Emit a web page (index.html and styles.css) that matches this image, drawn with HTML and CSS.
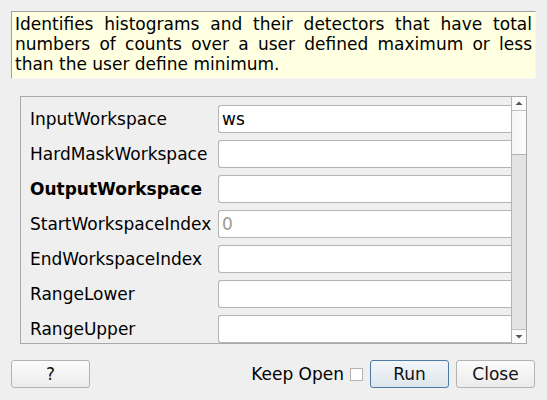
FILE: index.html
```html
<!DOCTYPE html>
<html>
<head>
<meta charset="utf-8">
<link rel="stylesheet" href="styles.css">
</head>
<body>
<div class="dialog">
  <div class="desc">Identifies histograms and their detectors that have total numbers of counts over a user defined maximum or less than the user define minimum.</div>
  <div class="panel">
    <div class="rows">
      <div class="row"><span class="label">InputWorkspace</span><div class="input">ws</div></div>
      <div class="row"><span class="label">HardMaskWorkspace</span><div class="input"></div></div>
      <div class="row"><span class="label bold">OutputWorkspace</span><div class="input"></div></div>
      <div class="row"><span class="label">StartWorkspaceIndex</span><div class="input ph">0</div></div>
      <div class="row"><span class="label">EndWorkspaceIndex</span><div class="input"></div></div>
      <div class="row"><span class="label">RangeLower</span><div class="input"></div></div>
      <div class="row"><span class="label">RangeUpper</span><div class="input"></div></div>
    </div>
    <div class="scrollbar">
      <div class="sbtn"><svg width="14" height="13" viewBox="0 0 14 13"><path d="M3.5 8 L10.5 8 L7 4.5 Z" fill="#555"/></svg></div>
      <div class="handle"></div>
      <div class="trough"></div>
      <div class="sbtn down"><svg width="14" height="13" viewBox="0 0 14 13"><path d="M3.5 5 L10.5 5 L7 8.5 Z" fill="#555"/></svg></div>
    </div>
  </div>
  <div class="footer">
    <button class="btn">?</button>
    <div class="spacer"></div>
    <span class="keep">Keep Open</span>
    <span class="check"></span>
    <button class="btn run">Run</button>
    <button class="btn">Close</button>
  </div>
</div>
</body>
</html>
```

FILE: styles.css
```css
html, body {
  margin: 0;
  padding: 0;
  background: #efefef;
  font-family: "DejaVu Sans", sans-serif;
  font-size: 17px;
  color: #000;
}
.dialog {
  width: 547px;
  height: 400px;
  box-sizing: border-box;
  padding: 11px 11px 0 11px;
}
.desc {
  background: #ffffe1;
  border-top: 1px solid #a0a0a0;
  border-left: 1px solid #a0a0a0;
  border-right: 1px solid #f6f6f6;
  border-bottom: 1px solid #f6f6f6;
  height: 68px;
  box-sizing: border-box;
  padding: 2px 3px 0 3px;
  line-height: 20px;
  text-align: justify;
  width: 525px;
}
.panel {
  margin: 17px 0 0 9px;
  width: 507px;
  height: 248px;
  box-sizing: border-box;
  border: 1px solid #a9a9a9;
  display: flex;
  overflow: hidden;
}
.rows {
  flex: 1;
  padding: 8px 0 0 9px;
  display: flex;
  flex-direction: column;
  gap: 7px;
  overflow: hidden;
}
.row {
  display: flex;
  align-items: center;
  height: 28px;
  flex-shrink: 0;
}
.label {
  width: 188px;
  flex-shrink: 0;
  white-space: nowrap;
}
.bold { font-weight: bold; }
.input {
  flex: 1;
  height: 28px;
  box-sizing: border-box;
  background: #fff;
  border: 1px solid #b4b4b4;
  border-radius: 3px 0 0 3px;
  border-right: none;
  padding: 0 3px;
  line-height: 26px;
}
.ph { color: #9a9a9a; }
.scrollbar {
  width: 14px;
  display: flex;
  flex-direction: column;
  border-left: 1px solid #b4b4b4;
}
.sbtn {
  height: 13px;
  background: #fafafa;
  border-bottom: 1px solid #c0c0c0;
  display: flex;
}
.sbtn.down {
  border-bottom: none;
  border-top: 1px solid #c0c0c0;
}
.handle {
  height: 43px;
  background: linear-gradient(to right, #f4f4f4, #fdfdfd);
  border-bottom: 1px solid #b4b4b4;
}
.trough {
  flex: 1;
  background: #e3e3e3;
}
.footer {
  display: flex;
  align-items: center;
  margin-top: 16px;
  width: 524px;
  height: 28px;
}
.btn {
  width: 79px;
  height: 28px;
  box-sizing: border-box;
  font-family: "DejaVu Sans", sans-serif;
  font-size: 17px;
  color: #111;
  background: linear-gradient(to bottom, #fbfbfb, #ececec);
  border: 1px solid #b3b3b3;
  border-radius: 3px;
  padding: 0;
}
.spacer { flex: 1; }
.keep { margin-right: 6px; }
.check {
  width: 11px;
  height: 11px;
  background: #fff;
  border: 1px solid #b3b3b3;
  margin-right: 7px;
}
.run {
  border-color: #4c7aa5;
  background: linear-gradient(to bottom, #f2f6f9, #dde6ec);
  margin-right: 7px;
}
```
